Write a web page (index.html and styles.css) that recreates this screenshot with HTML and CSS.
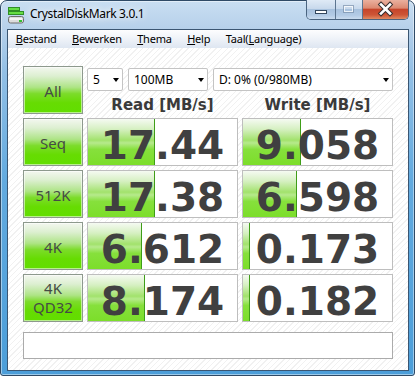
FILE: index.html
```html
<!DOCTYPE html>
<html>
<head>
<meta charset="utf-8">
<link rel="stylesheet" href="styles.css">
</head>
<body>
<div class="window">
  <div class="titlebar">
    <svg class="app-icon" width="16" height="17" viewBox="0 0 16 17">
      <rect x="0.5" y="0.5" width="11" height="3" fill="#66dd44" stroke="#2f8f25"/>
      <rect x="0.5" y="4.5" width="15" height="3" fill="#66dd44" stroke="#2f8f25"/>
      <rect x="0.5" y="9.5" width="15" height="6.5" rx="2" fill="#dcdcdc" stroke="#6f6f6f"/>
      <rect x="2" y="11" width="12" height="2" fill="#f4f4f4"/>
      <rect x="11" y="13" width="3" height="2" fill="#33c033"/>
    </svg>
    <span class="title">CrystalDiskMark 3.0.1</span>
    <div class="caps">
      <div class="cap cap-min">
        <svg width="28" height="18" viewBox="0 0 28 18"><rect x="8.5" y="10.5" width="11" height="3" fill="#fff" stroke="#33475e"/></svg>
      </div>
      <div class="cap cap-max">
        <svg width="26" height="18" viewBox="0 0 26 18"><rect x="7.5" y="5.5" width="10" height="7" fill="none" stroke="#6f86a0" stroke-opacity="0.6"/><rect x="8.5" y="6.5" width="8" height="5" fill="none" stroke="#fff" stroke-opacity="0.75"/></svg>
      </div>
      <div class="cap cap-close">
        <svg width="45" height="18" viewBox="0 0 45 18"><path d="M18 4.5 L27 13.5 M27 4.5 L18 13.5" stroke="#3a3030" stroke-width="4.6" stroke-linecap="square"/><path d="M18 4.5 L27 13.5 M27 4.5 L18 13.5" stroke="#fff" stroke-width="2.6" stroke-linecap="square"/></svg>
      </div>
    </div>
  </div>
  <div class="inner">
    <div class="menubar">
      <span class="menu-item"><u>B</u>estand</span>
      <span class="menu-item"><u>B</u>ewerken</span>
      <span class="menu-item"><u>T</u>hema</span>
      <span class="menu-item"><u>H</u>elp</span>
      <span class="menu-item">Taal(<u>L</u>anguage)</span>
    </div>
    <div class="client">
      <div class="bench">
        <div class="btn">All</div>
        <div class="top">
          <div class="combos">
            <div class="combo combo-count">5</div>
            <div class="combo combo-size">100MB</div>
            <div class="combo combo-drive">D: 0% (0/980MB)</div>
          </div>
          <div class="heads">
            <div>Read [MB/s]</div>
            <div>Write [MB/s]</div>
          </div>
        </div>

        <div class="btn">Seq</div>
        <div class="cell"><div class="bar" style="width:67px"></div><span class="val">17.44</span></div>
        <div class="cell"><div class="bar" style="width:58px"></div><span class="val">9.058</span></div>

        <div class="btn">512K</div>
        <div class="cell"><div class="bar" style="width:67px"></div><span class="val">17.38</span></div>
        <div class="cell"><div class="bar" style="width:54px"></div><span class="val">6.598</span></div>

        <div class="btn">4K</div>
        <div class="cell"><div class="bar" style="width:54px"></div><span class="val">6.612</span></div>
        <div class="cell"><div class="bar" style="width:7px"></div><span class="val">0.173</span></div>

        <div class="btn btn-two">4K<br>QD32</div>
        <div class="cell"><div class="bar" style="width:57px"></div><span class="val">8.174</span></div>
        <div class="cell"><div class="bar" style="width:7px"></div><span class="val">0.182</span></div>
      </div>
      <div class="comment"></div>
    </div>
  </div>
</div>
</body>
</html>
```

FILE: styles.css
```css
html, body {
  margin: 0;
  padding: 0;
  background: #ffffff;
}

.window {
  width: 415px;
  height: 376px;
  box-sizing: border-box;
  border: 1px solid #2f4a66;
  border-radius: 7px 7px 3px 3px;
  padding: 0 5px 4px 6px;
  background: linear-gradient(to bottom, #c9def2 0px, #b6d0ea 28px, #93c0e6 70px, #62aadf 180px, #4c9ed9 100%);
  box-shadow: inset 0 0 0 1px rgba(255, 255, 255, 0.45);
  display: flex;
  flex-direction: column;
}

.titlebar {
  height: 28px;
  display: flex;
  align-items: flex-start;
  flex: none;
}

.app-icon {
  margin: 6px 0 0 1px;
  flex: none;
}

.title {
  margin: 5px 0 0 6px;
  font-family: "Noto Sans", sans-serif;
  font-size: 12px;
  line-height: 16px;
  letter-spacing: -0.35px;
  color: #000;
  text-shadow: 0 0 6px #fff, 0 0 10px rgba(255, 255, 255, 0.9);
}

.caps {
  margin-left: auto;
  margin-top: -1px;
  display: flex;
  border: 1px solid #4a6480;
  border-top: none;
  border-radius: 0 0 5px 5px;
  overflow: hidden;
}

.cap {
  height: 19px;
  display: flex;
}

.cap svg {
  display: block;
}

.cap-min {
  width: 28px;
  background: linear-gradient(to bottom, #dfeaf6 0%, #c8d9ec 45%, #a8c2de 50%, #b3cbe5 80%, #cadcef 100%);
  border-right: 1px solid #5c7590;
}

.cap-max {
  width: 26px;
  background: linear-gradient(to bottom, #dfeaf6 0%, #c8d9ec 45%, #a8c2de 50%, #b3cbe5 80%, #cadcef 100%);
  border-right: 1px solid #5c7590;
}

.cap-close {
  width: 45px;
  background: linear-gradient(to bottom, #eab09e 0%, #dc8a72 42%, #c6452b 50%, #cd5536 78%, #e08a62 100%);
}

.inner {
  flex: 1;
  border: 1px solid #3b5672;
  display: flex;
  flex-direction: column;
  min-height: 0;
}

.menubar {
  height: 18px;
  flex: none;
  display: flex;
  background: linear-gradient(to bottom, #fdfdfe 0%, #eef2f8 50%, #dee6f1 100%);
  font-family: "Noto Sans", sans-serif;
  font-size: 11px;
  line-height: 18px;
  letter-spacing: -0.2px;
  color: #000;
}

.menu-item {
  padding: 0 7.7px;
}

.menu-item u {
  text-underline-offset: 1px;
}

.client {
  flex: 1;
  padding: 18px 0 0 15px;
  background: repeating-linear-gradient(135deg, #ffffff 0px, #ffffff 3px, #f1f1f1 3px, #f1f1f1 4px);
}

.bench {
  display: grid;
  grid-template-columns: 60px 151px 151px;
  grid-auto-rows: 48px;
  gap: 4px;
}

.btn {
  box-sizing: border-box;
  border: 1px solid #8d998d;
  box-shadow: inset 0 0 0 1px rgba(255, 255, 255, 0.55);
  background: linear-gradient(to bottom, #f3f7f0 0%, #dcefd0 20%, #aee486 44%, #7cdc2a 58%, #66dc02 78%, #62de00 100%);
  display: flex;
  align-items: center;
  justify-content: center;
  padding-top: 4px;
  text-align: center;
  font-family: "Noto Sans", sans-serif;
  font-size: 15px;
  line-height: 19.5px;
  color: #454b45;
}

.btn-two {
  padding-top: 0;
}

.top {
  grid-column: 2 / 4;
}

.combos {
  display: flex;
  gap: 5px;
  margin-top: 2px;
}

.combo {
  position: relative;
  height: 23px;
  box-sizing: border-box;
  border: 1px solid #c4c4c4;
  border-radius: 2px;
  background: #fff;
  padding-left: 5px;
  font-family: "Noto Sans", sans-serif;
  font-size: 12px;
  line-height: 21px;
  color: #000;
}

.combo::after {
  content: "";
  position: absolute;
  right: 3px;
  top: 9px;
  border-left: 3.5px solid transparent;
  border-right: 3.5px solid transparent;
  border-top: 4px solid #000;
}

.combo-count {
  width: 36px;
}

.combo-size {
  width: 80px;
}

.combo-drive {
  width: 180px;
}

.heads {
  display: grid;
  grid-template-columns: 151px 151px;
  gap: 4px;
  margin-top: 5px;
  font-family: "DejaVu Sans", sans-serif;
  font-weight: bold;
  font-size: 15px;
  line-height: 18px;
  text-align: center;
  color: #3a3a3a;
}

.cell {
  position: relative;
  box-sizing: border-box;
  border: 1px solid #bebebe;
  background: #fff;
  display: flex;
  align-items: flex-start;
  justify-content: center;
  padding-top: 8px;
}

.bar {
  position: absolute;
  left: 0;
  top: 0;
  bottom: 0;
  box-sizing: border-box;
  border-right: 1px solid #3f9d18;
  background: linear-gradient(to bottom, #f5faf2 0%, #d6f0c2 22%, #a2e26c 46%, #b6ea8c 52%, #86e03c 66%, #7cde2a 100%);
}

.val {
  position: relative;
  font-family: "DejaVu Sans", sans-serif;
  font-weight: bold;
  font-size: 39px;
  line-height: 38px;
  height: 38px;
  color: #404040;
}

.comment {
  margin-top: 10px;
  width: 370px;
  height: 27px;
  box-sizing: border-box;
  border: 1px solid #ababab;
  background: #fff;
}
```
